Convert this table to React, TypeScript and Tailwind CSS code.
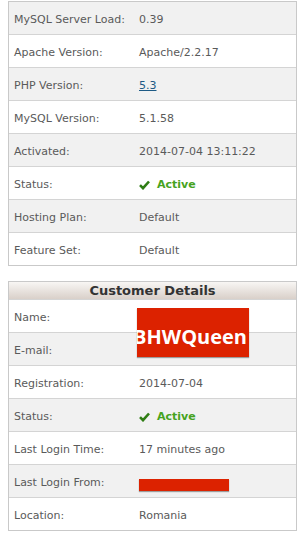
type Row = { label: string; value: React.ReactNode };

const font = { fontFamily: '"DejaVu Sans", Verdana, sans-serif' };

function Check() {
  return (
    <svg width="11" height="10" viewBox="0 0 11 10" className="mr-[7px] shrink-0">
      <path d="M1 5.2 L4 8.2 L10 1.5" fill="none" stroke="#2f7d14" strokeWidth="2.6" strokeLinejoin="miter" />
    </svg>
  );
}

function Active() {
  return (
    <span className="flex items-center font-bold text-[#46a31e]">
      <Check />
      Active
    </span>
  );
}

function DetailRow({ row, index }: Readonly<{ row: Row; index: number; }>) {
  const gray = index % 2 === 0;
  return (
    <div
      className={`flex h-[33px] items-center border-t border-[#d4d4d4] pt-[4px] first:h-[32px] first:border-t-0 ${gray ? "bg-[#f1f1f1]" : "bg-white"}`}
    >
      <div className="w-[130px] shrink-0 pl-[5px] text-[#5a5a5a]">{row.label}</div>
      <div className="flex items-center text-[#5a5a5a]">{row.value}</div>
    </div>
  );
}

export default function App() {
  const server: Row[] = [
    { label: "MySQL Server Load:", value: "0.39" },
    { label: "Apache Version:", value: "Apache/2.2.17" },
    { label: "PHP Version:", value: <a className="text-[#1d5a85] underline">5.3</a> },
    { label: "MySQL Version:", value: "5.1.58" },
    { label: "Activated:", value: "2014-07-04 13:11:22" },
    { label: "Status:", value: <Active /> },
    { label: "Hosting Plan:", value: "Default" },
    { label: "Feature Set:", value: "Default" },
  ];

  const customer: Row[] = [
    { label: "Name:", value: "" },
    { label: "E-mail:", value: "" },
    { label: "Registration:", value: "2014-07-04" },
    { label: "Status:", value: <Active /> },
    { label: "Last Login Time:", value: "17 minutes ago" },
    {
      label: "Last Login From:",
      value: <span className="mt-[3px] block h-[12px] w-[90px] bg-[#dc2200] shadow-[0_1px_1px_rgba(0,0,0,0.35)]" />,
    },
    { label: "Location:", value: "Romania" },
  ];

  return (
    <div className="min-h-[537px] bg-white pt-[1px] pl-[8px] text-[11px] leading-[14px]" style={font}>
      {/* Server info */}
      <div className="w-[289px] border border-[#c9c9c9]">
        {server.map((r, i) => (
          <DetailRow key={r.label} row={r} index={i} />
        ))}
      </div>

      {/* Customer details */}
      <div className="relative mt-[15px] w-[289px] border border-[#c9c9c9]">
        <div className="h-[17px] bg-gradient-to-b from-[#f8f6f4] to-[#d9d0c9] text-center text-[13px] font-bold leading-[17px] text-[#333]">
          Customer Details
        </div>
        {customer.map((r, i) => (
          <div key={r.label} className="border-t border-[#d4d4d4]">
            <div
              className={`flex h-[32px] items-center pt-[4px] ${i % 2 === 1 ? "bg-[#f1f1f1]" : "bg-white"}`}
            >
              <div className="w-[130px] shrink-0 pl-[5px] text-[#5a5a5a]">{r.label}</div>
              <div className="flex items-center text-[#5a5a5a]">{r.value}</div>
            </div>
          </div>
        ))}

        {/* redaction over name / email */}
        <div className="absolute left-[128px] top-[26px] flex h-[49px] w-[112px] justify-end overflow-hidden bg-[#dc2200] shadow-[0_1px_1px_rgba(0,0,0,0.35)]">
          <span
            className="whitespace-nowrap pt-[19px] pr-[2px] text-[20px] font-bold leading-[20px] text-white"
            style={{ fontFamily: '"Open Sans", sans-serif' }}
          >
            BHWQueen
          </span>
        </div>
      </div>
    </div>
  );
}
